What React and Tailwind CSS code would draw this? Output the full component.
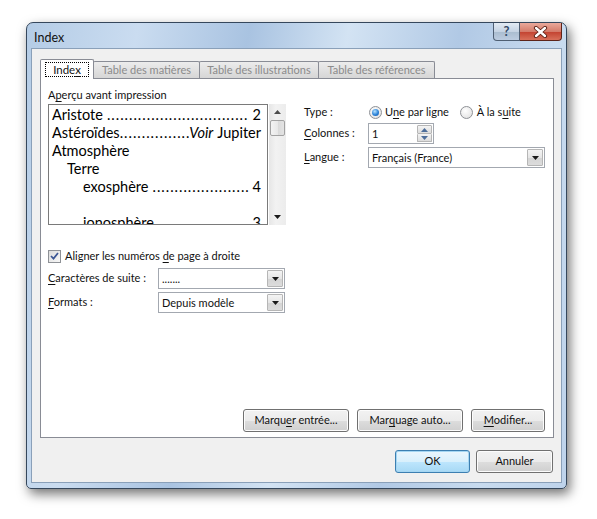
const DOTS = '.'.repeat(120);

function U({ children }) {
  return <span className="underline underline-offset-[2px]">{children}</span>;
}

function Arrow() {
  return (
    <svg width="7" height="4" viewBox="0 0 7 4">
      <path d="M0 0h7L3.5 4z" fill="#1a1a1a" />
    </svg>
  );
}

function Combo({ value, w }) {
  return (
    <div className={`flex h-[21px] ${w} border border-[#a3a8b0] bg-white`}>
      <span className="flex-1 pl-[3px] leading-[19px] whitespace-nowrap">{value}</span>
      <div className="w-[16px] my-[1px] mr-[1px] border border-[#b6b6b6] rounded-[1px] bg-[linear-gradient(#f4f4f4,#e6e6e6_50%,#d4d4d4_51%,#dcdcdc)] flex items-center justify-center">
        <Arrow />
      </div>
    </div>
  );
}

function Radio({ checked }) {
  return (
    <span className="w-[13px] h-[13px] rounded-full border border-[#8e9196] bg-[radial-gradient(circle_at_40%_35%,#ffffff,#dcdcdc)] flex items-center justify-center">
      {checked && (
        <span className="w-[7px] h-[7px] rounded-full bg-[radial-gradient(circle_at_40%_35%,#b7e3ff,#2a82d8_55%,#17509a)]" />
      )}
    </span>
  );
}

function Btn({ children, w, def }) {
  return (
    <div
      className={`${w} h-[23px] rounded-[3px] border flex items-center justify-center ${
        def
          ? 'border-[#3c7fb1] bg-[linear-gradient(#eaf6fd,#d9f0fc_50%,#bee6fd_51%,#a7d9f5)] shadow-[inset_0_0_0_1px_#a5d6f2]'
          : 'border-[#707070] bg-[linear-gradient(#f2f2f2,#ebebeb_50%,#dddddd_51%,#cfcfcf)] shadow-[inset_0_0_0_1px_#fcfcfc]'
      }`}
    >
      {children}
    </div>
  );
}

function Entry({ pl, name, page, italicPre }) {
  return (
    <div className={`flex h-[18px] items-center whitespace-nowrap ${pl}`}>
      <span>{name}</span>
      {page != null && (
        <span className={`flex-1 overflow-hidden tracking-[1px] ${italicPre ? 'ml-0' : 'ml-[4px]'}`}>{DOTS}</span>
      )}
      {italicPre && <span className="italic">{italicPre}</span>}
      {page != null && <span className="ml-[4px]">{page}</span>}
    </div>
  );
}

export default function App() {
  return (
    <div className="w-[597px] h-[519px] bg-white pl-[26px] pt-[22px] font-['Lato',sans-serif] text-[11px] text-[#111]">
      <div className="w-[541px] h-[467px] flex flex-col rounded-t-[7px] rounded-b-[5px] border border-[#35475c] bg-[linear-gradient(100deg,#b4cce6_0%,#cadcf0_18%,#a9c3e1_36%,#d3e3f3_52%,#b1c9e5_70%,#c8dbef_86%,#bed3eb_100%)] shadow-[3px_5px_12px_rgba(0,0,0,0.55)]">
        {/* title bar */}
        <div className="h-[25px] flex items-start">
          <span className="pl-[7px] pt-[6px] text-[12.5px]">Index</span>
          <div className="ml-auto mr-[4px] flex h-[18px]">
            <div className="w-[27px] h-[18px] rounded-bl-[4px] border border-[#4f5f73] border-t-0 bg-[linear-gradient(#e3ebf4,#c5d3e3_50%,#a9bccf_51%,#bccce0)] flex items-center justify-center text-[13px] font-bold text-[#334a66]">
              ?
            </div>
            <div className="w-[42px] h-[18px] rounded-br-[4px] border border-[#5d2419] border-t-0 border-l-0 bg-[linear-gradient(#e9a99b,#d47b6a_50%,#c2412f_51%,#d8705a)] flex items-center justify-center">
              <svg width="15" height="12" viewBox="0 0 15 12">
                <path d="M3 2l9 8M12 2l-9 8" stroke="#5b1f14" strokeWidth="4.2" strokeLinecap="round" />
                <path d="M3 2l9 8M12 2l-9 8" stroke="#ffffff" strokeWidth="2.4" strokeLinecap="round" />
              </svg>
            </div>
          </div>
        </div>

        {/* client area */}
        <div className="flex-1 mx-[4px] mb-[5px] border border-[#8aa0b9] bg-[#f0f0f0] flex flex-col pl-[8px] pr-[7px] pt-[10px]">
          {/* tabs */}
          <div className="flex items-end h-[19px]">
            <div className="w-[54px] h-[20px] mb-[-1px] z-10 bg-white border border-[#898c95] border-b-0 rounded-t-[2px] flex items-start justify-center pt-[2px]">
              <span className="border border-dotted border-black px-[7px] leading-[13px] text-[11.5px]">
                Inde<U>x</U>
              </span>
            </div>
            {['Table des matières', 'Table des illustrations', 'Table des références'].map((t, i) => (
              <div
                key={t}
                className={`h-[17px] ${i === 0 ? 'w-[107px]' : i === 1 ? 'w-[120px]' : 'w-[117px]'} -ml-px border border-[#898c95] border-b-0 rounded-t-[2px] bg-[linear-gradient(#ececec,#d6d6d6)] text-[#8b8b8b] flex items-center justify-center`}
              >
                {t}
              </div>
            ))}
          </div>

          {/* panel */}
          <div className="h-[360px] border border-[#898c95] bg-white flex flex-col">
            <div className="flex pl-[7px] pt-[9px]">
              {/* left column */}
              <div className="w-[238px] flex flex-col">
                <div className="h-[14px] leading-[14px]">
                  A<U>p</U>erçu avant impression
                </div>
                <div className="flex mt-[2px]">
                  <div className="w-[220px] h-[121px] border border-[#7a7a7a] overflow-hidden pl-[3px] pr-[6px] pt-[1px] text-[14.5px] leading-[18px] text-black">
                    <Entry pl="pl-0" name="Aristote" page="2" />
                    <Entry pl="pl-0" name="Astéroïdes" italicPre="Voir" page="Jupiter" />
                    <Entry pl="pl-0" name="Atmosphère" />
                    <Entry pl="pl-[15px]" name="Terre" />
                    <Entry pl="pl-[31px]" name="exosphère" page="4" />
                    <div className="h-[18px]" />
                    <Entry pl="pl-[31px]" name="ionosphère" page="3" />
                  </div>
                  <div className="w-[17px] h-[121px] ml-[1px] bg-[linear-gradient(90deg,#e6e6e6,#f2f2f2_40%,#ececec)] flex flex-col items-center">
                    <div className="h-[16px] flex items-center justify-center">
                      <svg width="7" height="4" viewBox="0 0 7 4">
                        <path d="M0 4h7L3.5 0z" fill="#4d4d4d" />
                      </svg>
                    </div>
                    <div className="w-[15px] h-[16px] border border-[#a2a2a2] rounded-[2px] bg-[linear-gradient(90deg,#f3f3f3,#e8e8e8_50%,#d9d9d9_51%,#e4e4e4)]" />
                    <div className="flex-1" />
                    <div className="h-[16px] flex items-center justify-center">
                      <Arrow />
                    </div>
                  </div>
                </div>

                <div className="flex items-center gap-[4px] mt-[24px] h-[14px]">
                  <span className="w-[13px] h-[13px] border border-[#8e9196] bg-[linear-gradient(135deg,#dcdcdc,#f7f7f7)] flex items-center justify-center">
                    <svg width="9" height="8" viewBox="0 0 9 8">
                      <path d="M1 4l2.5 2.6L8 1" stroke="#3a5594" strokeWidth="1.7" fill="none" />
                    </svg>
                  </span>
                  <span>
                    Aligner les numéros <U>d</U>e page à droite
                  </span>
                </div>

                <div className="flex items-center mt-[5px]">
                  <span className="w-[110px]">
                    <U>C</U>aractères de suite :
                  </span>
                  <Combo w="w-[127px]" value="......." />
                </div>
                <div className="flex items-center mt-[3px]">
                  <span className="w-[110px]">
                    <U>F</U>ormats :
                  </span>
                  <Combo w="w-[127px]" value="Depuis modèle" />
                </div>
              </div>

              {/* right column */}
              <div className="ml-[18px] flex flex-col pt-[16px]">
                <div className="flex items-center h-[16px]">
                  <span className="w-[65px]">Type :</span>
                  <Radio checked />
                  <span className="ml-[3px]">
                    U<U>n</U>e par ligne
                  </span>
                  <span className="ml-[11px]">
                    <Radio />
                  </span>
                  <span className="ml-[4px]">
                    À la s<U>u</U>ite
                  </span>
                </div>
                <div className="flex items-center mt-[3px]">
                  <span className="w-[64px]">
                    <U>C</U>olonnes :
                  </span>
                  <div className="w-[66px] h-[21px] border border-[#a3a8b0] bg-white flex">
                    <span className="flex-1 pl-[3px] leading-[19px]">1</span>
                    <div className="w-[15px] flex flex-col my-[1px] mr-[1px]">
                      <div className="flex-1 border border-[#b6b6b6] rounded-[1px] bg-[linear-gradient(#f4f4f4,#dcdcdc)] flex items-center justify-center">
                        <svg width="7" height="4" viewBox="0 0 7 4">
                          <path d="M0 4h7L3.5 0z" fill="#4d6d9a" />
                        </svg>
                      </div>
                      <div className="flex-1 border border-[#b6b6b6] border-t-0 rounded-[1px] bg-[linear-gradient(#f4f4f4,#dcdcdc)] flex items-center justify-center">
                        <svg width="7" height="4" viewBox="0 0 7 4">
                          <path d="M0 0h7L3.5 4z" fill="#4d6d9a" />
                        </svg>
                      </div>
                    </div>
                  </div>
                </div>
                <div className="flex items-center mt-[3px]">
                  <span className="w-[64px]">
                    <U>L</U>angue :
                  </span>
                  <Combo w="w-[177px]" value="Français (France)" />
                </div>
              </div>
            </div>

            <div className="mt-auto mb-[5px] mr-[8px] flex justify-end gap-[8px]">
              <Btn w="w-[106px]">
                Marqu<U>e</U>r entrée...
              </Btn>
              <Btn w="w-[106px]">
                Mar<U>q</U>uage auto...
              </Btn>
              <Btn w="w-[74px]">
                <U>M</U>odifier...
              </Btn>
            </div>
          </div>

          {/* footer */}
          <div className="flex justify-end gap-[6px] mt-[12px] pr-[1px]">
            <Btn w="w-[75px]" def>
              OK
            </Btn>
            <Btn w="w-[77px]">Annuler</Btn>
          </div>
        </div>
      </div>
    </div>
  );
}
